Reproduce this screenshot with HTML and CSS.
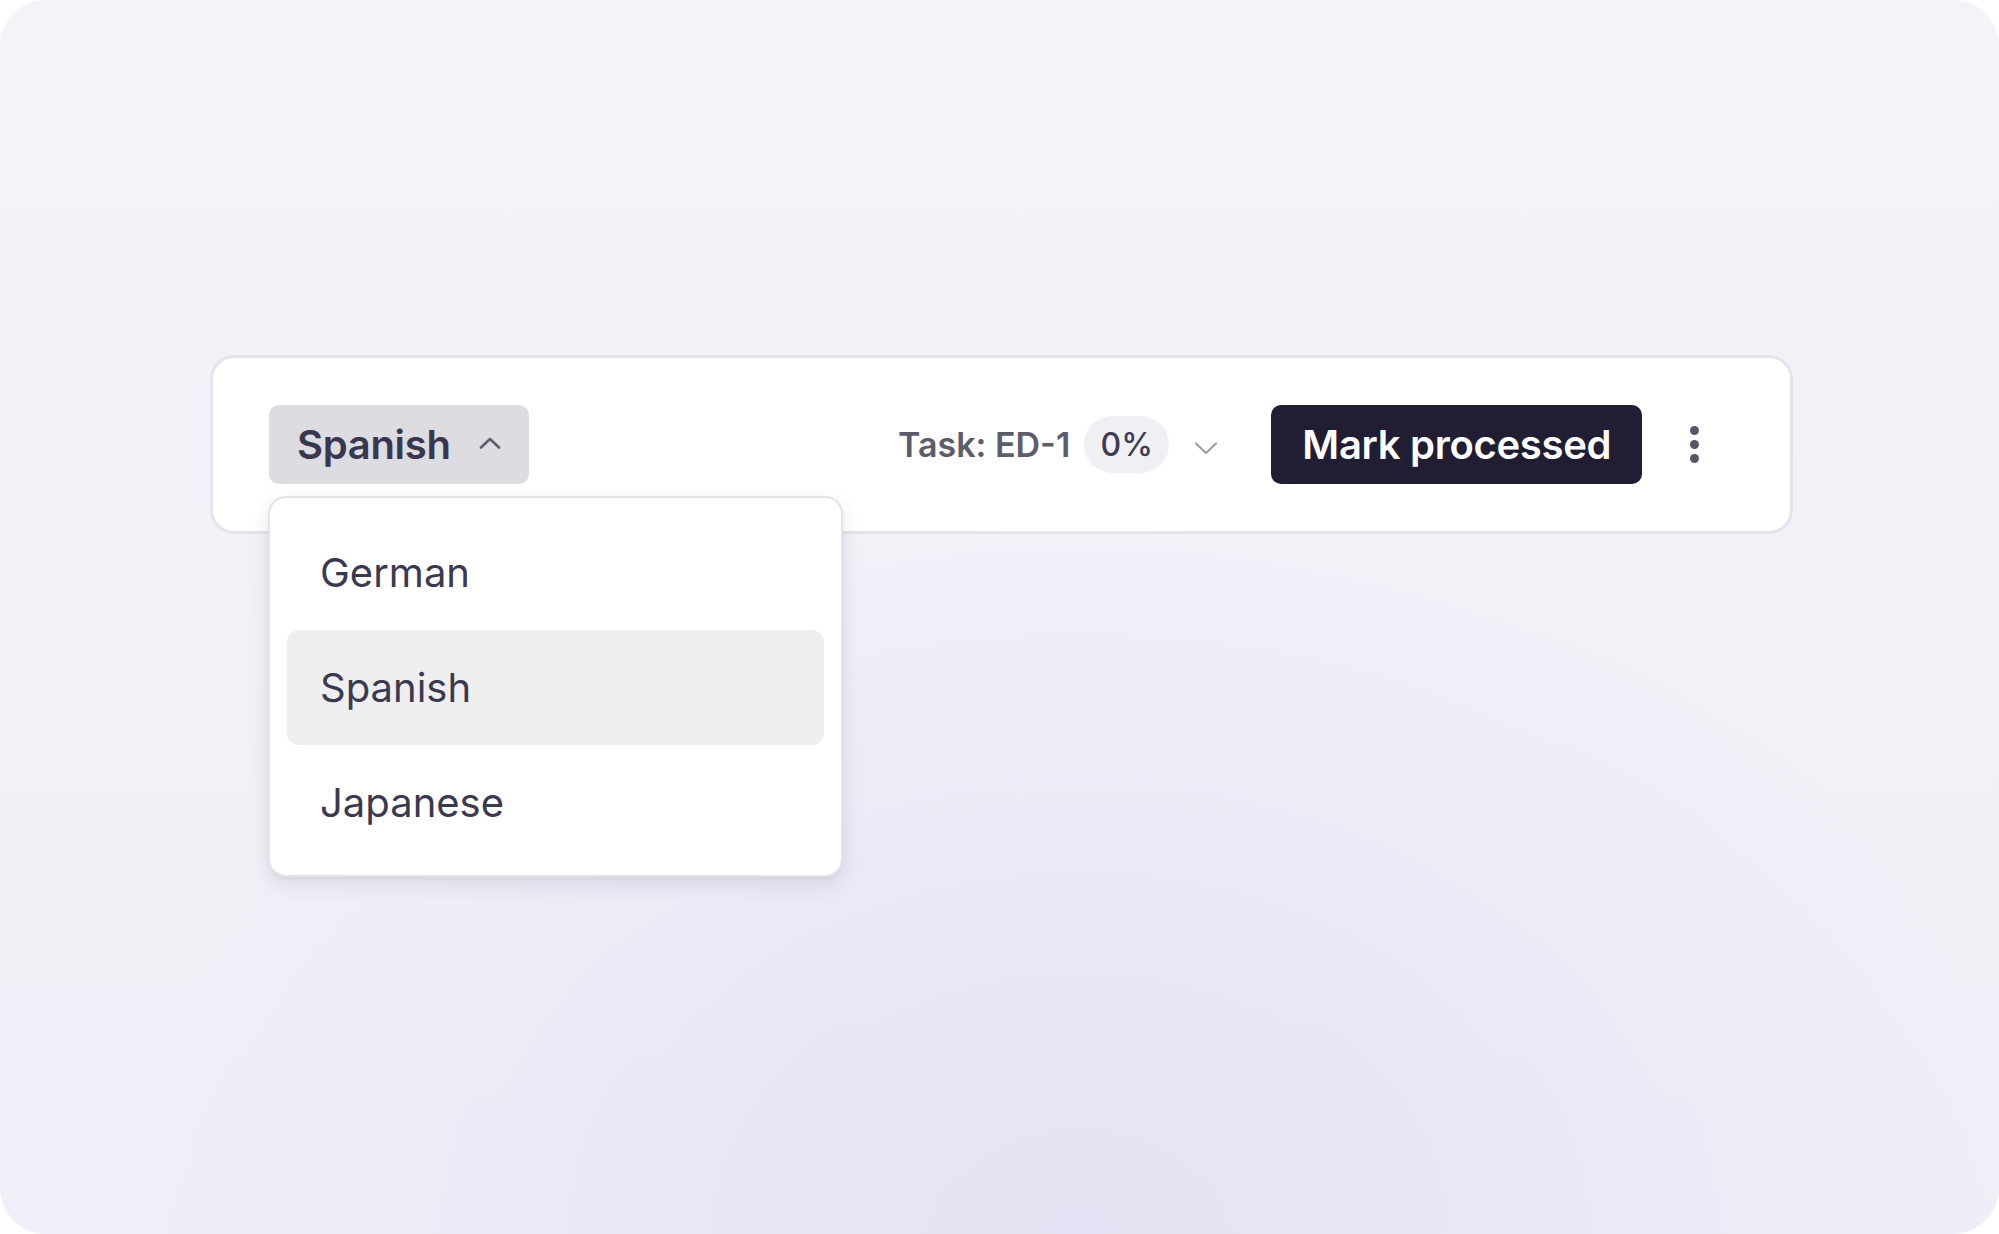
FILE: index.html
```html
<!DOCTYPE html>
<html lang="en">
<head>
<meta charset="utf-8">
<title>Toolbar</title>
<link rel="stylesheet" href="styles.css">
</head>
<body>
<div class="canvas">
  <div class="toolbar">
    <div class="lang">
      <button class="lang-btn">
        <span>Spanish</span>
        <svg class="chev-up" width="22" height="12" viewBox="0 0 22 12"><path d="M2 10.5 L11 2 L20 10.5" fill="none" stroke="#5f5e6b" stroke-width="2.6" stroke-linecap="round" stroke-linejoin="round"/></svg>
      </button>
      <div class="menu">
        <div class="item">German</div>
        <div class="item active">Spanish</div>
        <div class="item">Japanese</div>
      </div>
    </div>
    <div class="task">
      <span class="task-label">Task: ED-1</span>
      <span class="pill">0%</span>
      <svg class="chev-down" width="24" height="14" viewBox="0 0 24 14"><path d="M2 2.5 L12 12 L22 2.5" fill="none" stroke="#9d9ca8" stroke-width="2.2" stroke-linecap="round" stroke-linejoin="round"/></svg>
    </div>
    <button class="primary">Mark processed</button>
    <button class="kebab" aria-label="More">
      <span class="dot"></span><span class="dot"></span><span class="dot"></span>
    </button>
  </div>
</div>
</body>
</html>
```
FILE: styles.css
```css
* { box-sizing: border-box; }
html, body { margin: 0; padding: 0; background: #ffffff; }
body { font-family: Inter, "Noto Sans", sans-serif; }

.canvas {
  width: 1999px;
  height: 1234px;
  border-radius: 46px;
  background:
    radial-gradient(ellipse 950px 720px at 1080px 1234px, #e4e1f4 0%, rgba(228,225,244,0) 100%),
    linear-gradient(180deg, #f4f3f8 0%, #f0eff7 100%);
  padding: 355px 0 0 210px;
}

.toolbar {
  position: relative;
  width: 1583px;
  height: 179px;
  background: #ffffff;
  border: 3px solid #e4e4ea;
  border-radius: 24px;
  display: flex;
  align-items: center;
  padding: 0 0 0 56px;
}

.lang { position: relative; }

.lang-btn {
  display: flex;
  align-items: center;
  gap: 28px;
  height: 79px;
  width: 260px;
  padding: 0 0 0 28px;
  border: none;
  border-radius: 10px;
  background: #dcdce1;
  font-family: inherit;
  font-size: 40px;
  font-weight: 600;
  letter-spacing: -0.3px;
  color: #393750;
  cursor: pointer;
}
.chev-up { margin-top: -4px; }

.menu {
  position: absolute;
  top: 91px;
  left: -1px;
  width: 575px;
  height: 381px;
  background: #ffffff;
  border: 2px solid #e3e3e8;
  border-radius: 18px;
  box-shadow: 0 8px 20px rgba(60, 55, 100, 0.11), 0 2px 4px rgba(60, 55, 100, 0.06);
  padding: 17px 17px 17px;
  z-index: 2;
}

.item {
  height: 115px;
  display: flex;
  align-items: center;
  padding-left: 33px;
  border-radius: 12px;
  font-size: 40px;
  font-weight: 400;
  color: #3b3950;
}
.item.active { background: #efeff2; }

.task {
  display: flex;
  align-items: center;
  margin-left: 369px;
}
.task-label {
  font-size: 34px;
  font-weight: 600;
  color: #5d5c6b;
}
.pill {
  margin-left: 14px;
  height: 57px;
  width: 85px;
  border-radius: 29px;
  background: #f0f0f4;
  display: flex;
  align-items: center;
  justify-content: center;
  font-size: 32px;
  font-weight: 500;
  color: #3d3b50;
}
.chev-down { margin-left: 25px; margin-top: 6px; }

.primary {
  margin-left: 53px;
  height: 79px;
  width: 371px;
  border: none;
  border-radius: 10px;
  background: #211d33;
  color: #ffffff;
  font-family: inherit;
  font-size: 40px;
  font-weight: 600;
  letter-spacing: -0.3px;
  cursor: pointer;
}

.kebab {
  margin-left: 32px;
  width: 40px;
  height: 60px;
  border: none;
  background: transparent;
  display: flex;
  flex-direction: column;
  align-items: center;
  justify-content: center;
  gap: 5px;
  padding: 0;
}
.dot {
  width: 9px;
  height: 9px;
  border-radius: 50%;
  background: #56556a;
}
```
